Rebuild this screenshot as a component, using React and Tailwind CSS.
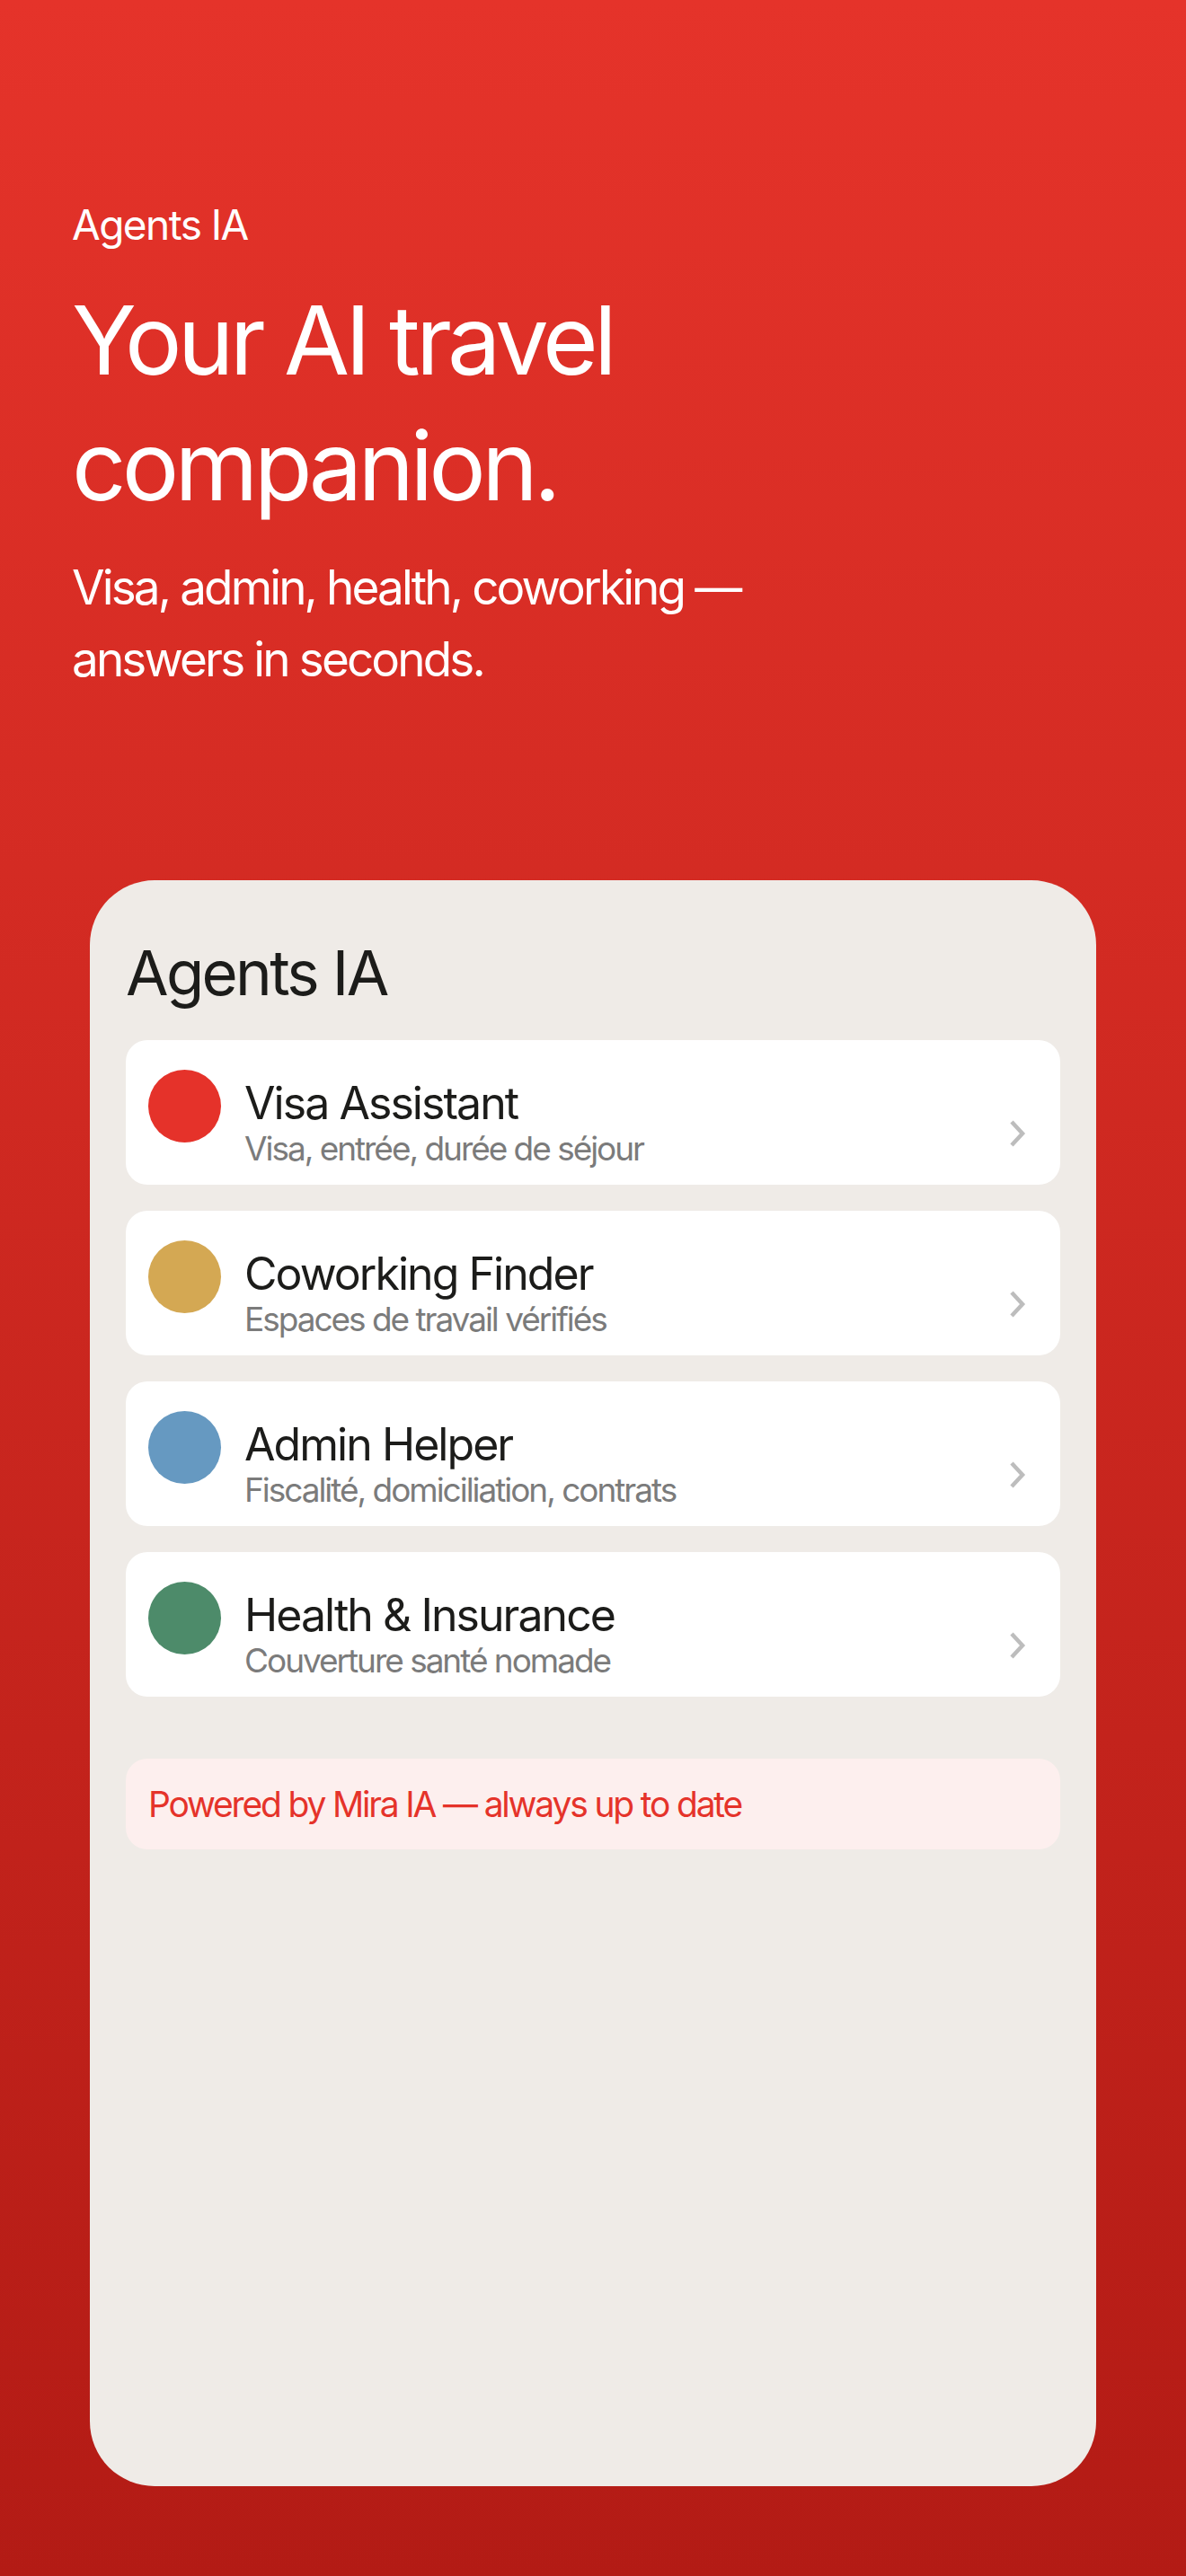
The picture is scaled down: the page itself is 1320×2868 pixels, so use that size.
const agents = [
  { name: "Visa Assistant", desc: "Visa, entrée, durée de séjour", dot: "bg-[#e5322a]" },
  { name: "Coworking Finder", desc: "Espaces de travail vérifiés", dot: "bg-[#d4a853]" },
  { name: "Admin Helper", desc: "Fiscalité, domiciliation, contrats", dot: "bg-[#6699c1]" },
  { name: "Health & Insurance", desc: "Couverture santé nomade", dot: "bg-[#4d8b6a]" },
];

function Chevron() {
  return (
    <svg width="20" height="30" viewBox="0 0 20 30" className="shrink-0">
      <polyline points="3,2 15,15 3,28" fill="none" stroke="#bdbdbd" strokeWidth="4.5" />
    </svg>
  );
}

function AgentRow({ agent }) {
  return (
    <div className="flex h-[161px] items-start rounded-[24px] bg-white pl-[25px] pr-[37px]">
      <span className={`mt-[33px] h-[81px] w-[81px] shrink-0 rounded-full ${agent.dot}`} />
      <div className="ml-[26px] mt-[42px] min-w-0 flex-1">
        <p className="text-[50px] leading-[57px] tracking-[-0.039em] text-[#1c1c1a]">{agent.name}</p>
        <p className="text-[37px] leading-[44px] tracking-[-0.055em] text-[#7b7b7b]">{agent.desc}</p>
      </div>
      <div className="mt-[89px]">
        <Chevron />
      </div>
    </div>
  );
}

export default function App() {
  return (
    <main
      className="flex min-h-screen flex-col bg-gradient-to-b from-[#e5332a] to-[#b31b15] px-[80px] pb-[100px] pt-[222px]"
      style={{ fontFamily: "Inter, 'Noto Sans', sans-serif" }}
    >
      {/* Hero copy */}
      <section className="max-w-[860px] text-white">
        <p className="text-[46px] leading-[56px] tracking-[-0.034em]">Agents IA</p>
        <h1 className="mt-[31px] text-[106px] leading-[140px] tracking-[-0.045em]">
          Your AI travel companion.
        </h1>
        <p className="mt-[25px] text-[53px] leading-[80px] tracking-[-0.054em]">
          Visa, admin, health, coworking — answers in seconds.
        </p>
      </section>

      {/* Phone card */}
      <section className="mx-[20px] mt-[206px] flex flex-1 flex-col rounded-[72px] bg-[#efebe7] px-[40px] pt-[62px]">
        <h2 className="text-[69px] leading-[83px] tracking-[-0.039em] text-[#1c1c1a]">Agents IA</h2>
        <div className="mt-[33px] flex flex-col gap-[29px]">
          {agents.map((agent) => (
            <AgentRow key={agent.name} agent={agent} />
          ))}
        </div>
        <div className="mt-[69px] flex h-[101px] items-center rounded-[24px] bg-[#fdefee] px-[25px]">
          <p className="text-[39px] leading-[47px] tracking-[-0.056em] text-[#e5332a]">
            Powered by Mira IA — always up to date
          </p>
        </div>
      </section>
    </main>
  );
}
